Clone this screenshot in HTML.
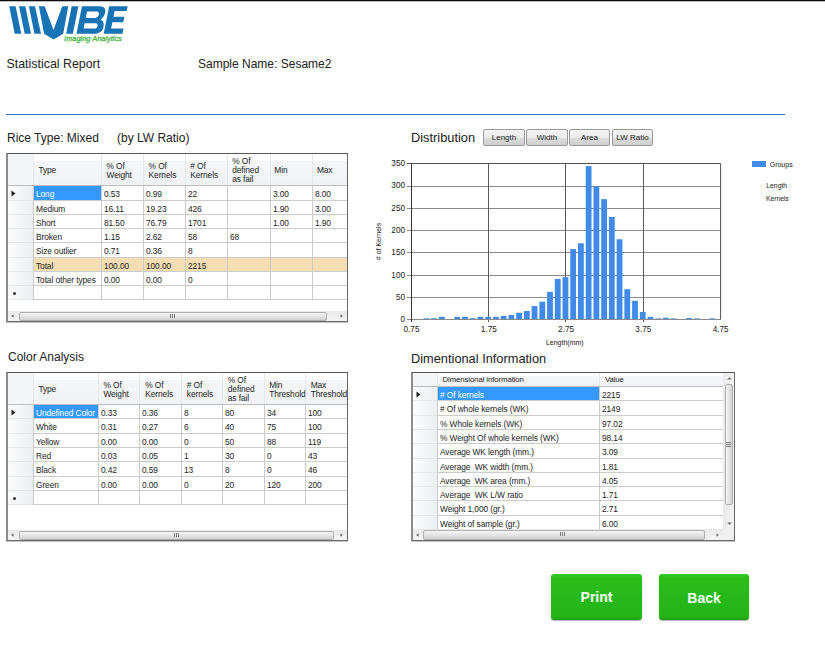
<!DOCTYPE html>
<html><head><meta charset="utf-8"><style>
html,body{margin:0;padding:0;background:#fff;}
body{width:825px;height:661px;position:relative;overflow:hidden;font-family:"Liberation Sans", sans-serif;}
.t{position:absolute;white-space:pre;line-height:1;}
.r{position:absolute;box-sizing:border-box;}

</style></head><body>
<div class="r" style="left:0px;top:0px;width:825px;height:1px;background:#0c0c0c"></div>
<div class="r" style="left:0px;top:1px;width:825px;height:1px;background:#bcbcbc"></div>
<svg style="position:absolute;left:0;top:0" width="140" height="50" viewBox="0 0 140 50">
<g fill="#1873b4">
<polygon points="9.2,6.2 15.6,6.2 21.3,33.8 14.7,33.8"/>
<polygon points="19.0,6.2 25.3,6.2 31.0,33.8 24.7,33.8"/>
<polygon points="28.9,6.2 35.0,6.2 41.0,33.8 34.4,33.8"/>
<polygon points="38.9,6.2 44.7,6.2 53.5,30 62.3,6.2 68.3,6.2 63.2,33.8 53.5,39.4 44.1,33.8"/>
<g transform="translate(6.72,0) skewX(-11.3)">
<rect x="66.2" y="6.2" width="6.7" height="27.6"/>
<path fill-rule="evenodd" d="M76.5,6.2 H94 C99.5,6.2 101,9.5 101,12.5 C101,15.5 99.8,17.8 97.8,19.6 C100.8,20.8 102.2,23.5 102.2,27 C102.2,31 99,33.8 94.5,33.8 H76.5 Z M82.6,11.4 H92.3 C94.3,11.4 95,12.8 95,14.6 C95,16.5 94,17.9 92,17.9 H82.6 Z M82.6,23.2 H93.3 C95.3,23.2 96,24.5 96,25.9 C96,27.5 95,28.6 93.3,28.6 H82.6 Z"/>
<path d="M103.7,6.2 H122.2 V11 H110.1 V16.8 H121 V22.3 H110.1 V28.5 H122.5 V33.8 H103.7 Z"/>
</g>
</g>
<text x="64.1" y="41.4" font-family="Liberation Sans" font-style="italic" font-size="7.9" fill="#35b035" stroke="#35b035" stroke-width="0.25" textLength="57.7" lengthAdjust="spacingAndGlyphs">Imaging Analytics</text>
</svg>
<div class="t" style="left:6.5px;top:58.4px;font-size:12.4px;color:#222;">Statistical Report</div>
<div class="t" style="left:198px;top:58.4px;font-size:12px;color:#222;">Sample Name: Sesame2</div>
<div class="r" style="left:6px;top:114px;width:779px;height:1px;background:#3877b5"></div>
<div class="t" style="left:7px;top:132px;font-size:12px;color:#222;">Rice Type: Mixed</div>
<div class="t" style="left:117px;top:132px;font-size:12px;color:#222;">(by LW Ratio)</div>
<div class="t" style="left:411px;top:132.2px;font-size:12.8px;color:#222;">Distribution</div>
<div class="t" style="left:8px;top:351.2px;font-size:12px;color:#222;">Color Analysis</div>
<div class="t" style="left:411px;top:353.3px;font-size:12.8px;color:#222;">Dimentional Information</div>
<div class="r" style="left:6px;top:153px;width:342px;height:170px;background:#fff"></div>
<div class="r" style="left:7px;top:154px;width:340px;height:31px;background:linear-gradient(#ffffff 0%,#ffffff 22%,#f5f6f8 23%,#f1f2f5 100%)"></div>
<div class="r" style="left:7px;top:154px;width:26px;height:31px;background:#f4f5f7"></div>
<div class="r" style="left:7px;top:186px;width:26px;height:114px;background:linear-gradient(90deg,#fdfdfd,#eceef1)"></div>
<div class="r" style="left:33px;top:154px;width:1px;height:31px;background:#e8e8e8"></div>
<div class="r" style="left:101px;top:154px;width:1px;height:31px;background:#e8e8e8"></div>
<div class="r" style="left:143px;top:154px;width:1px;height:31px;background:#e8e8e8"></div>
<div class="r" style="left:185px;top:154px;width:1px;height:31px;background:#e8e8e8"></div>
<div class="r" style="left:227px;top:154px;width:1px;height:31px;background:#e8e8e8"></div>
<div class="r" style="left:270px;top:154px;width:1px;height:31px;background:#e8e8e8"></div>
<div class="r" style="left:312px;top:154px;width:1px;height:31px;background:#e8e8e8"></div>
<div class="r" style="left:7px;top:185px;width:340px;height:1px;background:#bdbdbd"></div>
<div class="r" style="left:34px;top:258px;width:313px;height:13px;background:#f5deb3"></div>
<div class="r" style="left:34px;top:186px;width:67px;height:14px;background:#3399ff"></div>
<div class="r" style="left:33px;top:186px;width:1px;height:114px;background:#cccccc"></div>
<div class="r" style="left:101px;top:186px;width:1px;height:114px;background:#cccccc"></div>
<div class="r" style="left:143px;top:186px;width:1px;height:114px;background:#cccccc"></div>
<div class="r" style="left:185px;top:186px;width:1px;height:114px;background:#cccccc"></div>
<div class="r" style="left:227px;top:186px;width:1px;height:114px;background:#cccccc"></div>
<div class="r" style="left:270px;top:186px;width:1px;height:114px;background:#cccccc"></div>
<div class="r" style="left:312px;top:186px;width:1px;height:114px;background:#cccccc"></div>
<div class="r" style="left:33px;top:200px;width:314px;height:1px;background:#cccccc"></div>
<div class="r" style="left:7px;top:200px;width:26px;height:1px;background:#e6e7ea"></div>
<div class="r" style="left:33px;top:214px;width:314px;height:1px;background:#cccccc"></div>
<div class="r" style="left:7px;top:214px;width:26px;height:1px;background:#e6e7ea"></div>
<div class="r" style="left:33px;top:228px;width:314px;height:1px;background:#cccccc"></div>
<div class="r" style="left:7px;top:228px;width:26px;height:1px;background:#e6e7ea"></div>
<div class="r" style="left:33px;top:242px;width:314px;height:1px;background:#cccccc"></div>
<div class="r" style="left:7px;top:242px;width:26px;height:1px;background:#e6e7ea"></div>
<div class="r" style="left:33px;top:257px;width:314px;height:1px;background:#cccccc"></div>
<div class="r" style="left:7px;top:257px;width:26px;height:1px;background:#e6e7ea"></div>
<div class="r" style="left:33px;top:271px;width:314px;height:1px;background:#cccccc"></div>
<div class="r" style="left:7px;top:271px;width:26px;height:1px;background:#e6e7ea"></div>
<div class="r" style="left:33px;top:285px;width:314px;height:1px;background:#cccccc"></div>
<div class="r" style="left:7px;top:285px;width:26px;height:1px;background:#e6e7ea"></div>
<div class="r" style="left:33px;top:299px;width:314px;height:1px;background:#cccccc"></div>
<div class="r" style="left:7px;top:299px;width:26px;height:1px;background:#e6e7ea"></div>
<div class="t" style="left:38.4px;top:166.1px;font-size:8.4px;color:#1e1e1e;letter-spacing:-0.1px">Type</div>
<div class="t" style="left:106.5px;top:161.8px;font-size:8.4px;color:#1e1e1e;letter-spacing:-0.1px">% Of</div>
<div class="t" style="left:106.5px;top:170.5px;font-size:8.4px;color:#1e1e1e;letter-spacing:-0.1px">Weight</div>
<div class="t" style="left:148.6px;top:161.8px;font-size:8.4px;color:#1e1e1e;letter-spacing:-0.1px">% Of</div>
<div class="t" style="left:148.6px;top:170.5px;font-size:8.4px;color:#1e1e1e;letter-spacing:-0.1px">Kernels</div>
<div class="t" style="left:190.3px;top:161.8px;font-size:8.4px;color:#1e1e1e;letter-spacing:-0.1px"># Of</div>
<div class="t" style="left:190.3px;top:170.5px;font-size:8.4px;color:#1e1e1e;letter-spacing:-0.1px">Kernels</div>
<div class="t" style="left:232.2px;top:156.7px;font-size:8.4px;color:#1e1e1e;letter-spacing:-0.1px">% Of</div>
<div class="t" style="left:232.2px;top:165.7px;font-size:8.4px;color:#1e1e1e;letter-spacing:-0.1px">defined</div>
<div class="t" style="left:232.2px;top:174.8px;font-size:8.4px;color:#1e1e1e;letter-spacing:-0.1px">as fail</div>
<div class="t" style="left:274.3px;top:166.1px;font-size:8.4px;color:#1e1e1e;letter-spacing:-0.1px">Min</div>
<div class="t" style="left:316.9px;top:166.1px;font-size:8.4px;color:#1e1e1e;letter-spacing:-0.1px">Max</div>
<div class="t" style="left:36.0px;top:189.6px;font-size:8.4px;color:#fff;letter-spacing:-0.1px">Long</div>
<div class="t" style="left:104.0px;top:189.6px;font-size:8.4px;color:#1e1e1e;letter-spacing:-0.1px">0.53</div>
<div class="t" style="left:146.0px;top:189.6px;font-size:8.4px;color:#1e1e1e;letter-spacing:-0.1px">0.99</div>
<div class="t" style="left:188.0px;top:189.6px;font-size:8.4px;color:#1e1e1e;letter-spacing:-0.1px">22</div>
<div class="t" style="left:273.0px;top:189.6px;font-size:8.4px;color:#1e1e1e;letter-spacing:-0.1px">3.00</div>
<div class="t" style="left:315.0px;top:189.6px;font-size:8.4px;color:#1e1e1e;letter-spacing:-0.1px">8.00</div>
<div class="t" style="left:36.0px;top:204.6px;font-size:8.4px;color:#1e1e1e;letter-spacing:-0.1px">Medium</div>
<div class="t" style="left:104.0px;top:204.6px;font-size:8.4px;color:#1e1e1e;letter-spacing:-0.1px">16.11</div>
<div class="t" style="left:146.0px;top:204.6px;font-size:8.4px;color:#1e1e1e;letter-spacing:-0.1px">19.23</div>
<div class="t" style="left:188.0px;top:204.6px;font-size:8.4px;color:#1e1e1e;letter-spacing:-0.1px">426</div>
<div class="t" style="left:273.0px;top:204.6px;font-size:8.4px;color:#1e1e1e;letter-spacing:-0.1px">1.90</div>
<div class="t" style="left:315.0px;top:204.6px;font-size:8.4px;color:#1e1e1e;letter-spacing:-0.1px">3.00</div>
<div class="t" style="left:36.0px;top:218.6px;font-size:8.4px;color:#1e1e1e;letter-spacing:-0.1px">Short</div>
<div class="t" style="left:104.0px;top:218.6px;font-size:8.4px;color:#1e1e1e;letter-spacing:-0.1px">81.50</div>
<div class="t" style="left:146.0px;top:218.6px;font-size:8.4px;color:#1e1e1e;letter-spacing:-0.1px">76.79</div>
<div class="t" style="left:188.0px;top:218.6px;font-size:8.4px;color:#1e1e1e;letter-spacing:-0.1px">1701</div>
<div class="t" style="left:273.0px;top:218.6px;font-size:8.4px;color:#1e1e1e;letter-spacing:-0.1px">1.00</div>
<div class="t" style="left:315.0px;top:218.6px;font-size:8.4px;color:#1e1e1e;letter-spacing:-0.1px">1.90</div>
<div class="t" style="left:36.0px;top:232.6px;font-size:8.4px;color:#1e1e1e;letter-spacing:-0.1px">Broken</div>
<div class="t" style="left:104.0px;top:232.6px;font-size:8.4px;color:#1e1e1e;letter-spacing:-0.1px">1.15</div>
<div class="t" style="left:146.0px;top:232.6px;font-size:8.4px;color:#1e1e1e;letter-spacing:-0.1px">2.62</div>
<div class="t" style="left:188.0px;top:232.6px;font-size:8.4px;color:#1e1e1e;letter-spacing:-0.1px">58</div>
<div class="t" style="left:230.0px;top:232.6px;font-size:8.4px;color:#1e1e1e;letter-spacing:-0.1px">68</div>
<div class="t" style="left:36.0px;top:246.6px;font-size:8.4px;color:#1e1e1e;letter-spacing:-0.1px">Size outlier</div>
<div class="t" style="left:104.0px;top:246.6px;font-size:8.4px;color:#1e1e1e;letter-spacing:-0.1px">0.71</div>
<div class="t" style="left:146.0px;top:246.6px;font-size:8.4px;color:#1e1e1e;letter-spacing:-0.1px">0.36</div>
<div class="t" style="left:188.0px;top:246.6px;font-size:8.4px;color:#1e1e1e;letter-spacing:-0.1px">8</div>
<div class="t" style="left:36.0px;top:261.6px;font-size:8.4px;color:#1e1e1e;letter-spacing:-0.1px">Total</div>
<div class="t" style="left:104.0px;top:261.6px;font-size:8.4px;color:#1e1e1e;letter-spacing:-0.1px">100.00</div>
<div class="t" style="left:146.0px;top:261.6px;font-size:8.4px;color:#1e1e1e;letter-spacing:-0.1px">100.00</div>
<div class="t" style="left:188.0px;top:261.6px;font-size:8.4px;color:#1e1e1e;letter-spacing:-0.1px">2215</div>
<div class="t" style="left:36.0px;top:275.6px;font-size:8.4px;color:#1e1e1e;letter-spacing:-0.1px">Total other types</div>
<div class="t" style="left:104.0px;top:275.6px;font-size:8.4px;color:#1e1e1e;letter-spacing:-0.1px">0.00</div>
<div class="t" style="left:146.0px;top:275.6px;font-size:8.4px;color:#1e1e1e;letter-spacing:-0.1px">0.00</div>
<div class="t" style="left:188.0px;top:275.6px;font-size:8.4px;color:#1e1e1e;letter-spacing:-0.1px">0</div>
<svg class="r" style="left:10.6px;top:189.5px" width="6" height="7"><polygon points="0.5,0.5 4.5,3.5 0.5,6.5" fill="#222"/></svg>
<div class="r" style="left:6px;top:153px;width:342px;height:169px;border-left:2px solid #8c8c8c;border-top:1px solid #555;border-right:1px solid #686868;border-bottom:1px solid #6a6a6a;box-shadow:0 1px 0 #c4c4c4"></div>
<div class="r" style="left:12.5px;top:291.6px;width:3px;height:3px;border-radius:50%;background:#333"></div>
<div class="r" style="left:8px;top:311px;width:339px;height:10px;background:linear-gradient(#e9e9e9,#f4f4f4)"></div>
<div class="r" style="left:18.8px;top:311.5px;width:308.2px;height:9px;border:1px solid #b0b0b0;border-radius:2px;background:linear-gradient(#f5f5f5 0%,#e6e6e6 45%,#d2d2d2 100%)"></div>
<div class="r" style="left:170px;top:314px;width:1px;height:4px;background:#7a7a7a"></div>
<div class="r" style="left:172px;top:314px;width:1px;height:4px;background:#7a7a7a"></div>
<div class="r" style="left:174px;top:314px;width:1px;height:4px;background:#7a7a7a"></div>
<svg class="r" style="left:9.8px;top:313.0px" width="5" height="6"><polygon points="3.5,1.2 1.2,3 3.5,4.8" fill="#666"/></svg>
<svg class="r" style="left:339px;top:313.0px" width="5" height="6"><polygon points="1.5,1.2 3.8,3 1.5,4.8" fill="#666"/></svg>
<div class="r" style="left:6px;top:372px;width:342px;height:170px;background:#fff"></div>
<div class="r" style="left:7px;top:373px;width:340px;height:31px;background:linear-gradient(#ffffff 0%,#ffffff 22%,#f5f6f8 23%,#f1f2f5 100%)"></div>
<div class="r" style="left:7px;top:373px;width:26px;height:31px;background:#f4f5f7"></div>
<div class="r" style="left:7px;top:405px;width:26px;height:100px;background:linear-gradient(90deg,#fdfdfd,#eceef1)"></div>
<div class="r" style="left:33px;top:373px;width:1px;height:31px;background:#e8e8e8"></div>
<div class="r" style="left:98px;top:373px;width:1px;height:31px;background:#e8e8e8"></div>
<div class="r" style="left:139px;top:373px;width:1px;height:31px;background:#e8e8e8"></div>
<div class="r" style="left:181px;top:373px;width:1px;height:31px;background:#e8e8e8"></div>
<div class="r" style="left:222px;top:373px;width:1px;height:31px;background:#e8e8e8"></div>
<div class="r" style="left:264px;top:373px;width:1px;height:31px;background:#e8e8e8"></div>
<div class="r" style="left:305px;top:373px;width:1px;height:31px;background:#e8e8e8"></div>
<div class="r" style="left:7px;top:404px;width:340px;height:1px;background:#bdbdbd"></div>
<div class="r" style="left:34px;top:405px;width:64px;height:13px;background:#3399ff"></div>
<div class="r" style="left:33px;top:405px;width:1px;height:100px;background:#cccccc"></div>
<div class="r" style="left:98px;top:405px;width:1px;height:100px;background:#cccccc"></div>
<div class="r" style="left:139px;top:405px;width:1px;height:100px;background:#cccccc"></div>
<div class="r" style="left:181px;top:405px;width:1px;height:100px;background:#cccccc"></div>
<div class="r" style="left:222px;top:405px;width:1px;height:100px;background:#cccccc"></div>
<div class="r" style="left:264px;top:405px;width:1px;height:100px;background:#cccccc"></div>
<div class="r" style="left:305px;top:405px;width:1px;height:100px;background:#cccccc"></div>
<div class="r" style="left:33px;top:418px;width:314px;height:1px;background:#cccccc"></div>
<div class="r" style="left:7px;top:418px;width:26px;height:1px;background:#e6e7ea"></div>
<div class="r" style="left:33px;top:433px;width:314px;height:1px;background:#cccccc"></div>
<div class="r" style="left:7px;top:433px;width:26px;height:1px;background:#e6e7ea"></div>
<div class="r" style="left:33px;top:447px;width:314px;height:1px;background:#cccccc"></div>
<div class="r" style="left:7px;top:447px;width:26px;height:1px;background:#e6e7ea"></div>
<div class="r" style="left:33px;top:461px;width:314px;height:1px;background:#cccccc"></div>
<div class="r" style="left:7px;top:461px;width:26px;height:1px;background:#e6e7ea"></div>
<div class="r" style="left:33px;top:476px;width:314px;height:1px;background:#cccccc"></div>
<div class="r" style="left:7px;top:476px;width:26px;height:1px;background:#e6e7ea"></div>
<div class="r" style="left:33px;top:490px;width:314px;height:1px;background:#cccccc"></div>
<div class="r" style="left:7px;top:490px;width:26px;height:1px;background:#e6e7ea"></div>
<div class="r" style="left:33px;top:504px;width:314px;height:1px;background:#cccccc"></div>
<div class="r" style="left:7px;top:504px;width:26px;height:1px;background:#e6e7ea"></div>
<div class="t" style="left:38.4px;top:385.1px;font-size:8.4px;color:#1e1e1e;letter-spacing:-0.1px">Type</div>
<div class="t" style="left:103.4px;top:380.8px;font-size:8.4px;color:#1e1e1e;letter-spacing:-0.1px">% Of</div>
<div class="t" style="left:103.4px;top:389.5px;font-size:8.4px;color:#1e1e1e;letter-spacing:-0.1px">Weight</div>
<div class="t" style="left:145.3px;top:380.8px;font-size:8.4px;color:#1e1e1e;letter-spacing:-0.1px">% Of</div>
<div class="t" style="left:145.3px;top:389.5px;font-size:8.4px;color:#1e1e1e;letter-spacing:-0.1px">Kernels</div>
<div class="t" style="left:186.8px;top:380.8px;font-size:8.4px;color:#1e1e1e;letter-spacing:-0.1px"># Of</div>
<div class="t" style="left:186.8px;top:389.5px;font-size:8.4px;color:#1e1e1e;letter-spacing:-0.1px">kernels</div>
<div class="t" style="left:227.8px;top:375.7px;font-size:8.4px;color:#1e1e1e;letter-spacing:-0.1px">% Of</div>
<div class="t" style="left:227.8px;top:384.7px;font-size:8.4px;color:#1e1e1e;letter-spacing:-0.1px">defined</div>
<div class="t" style="left:227.8px;top:393.8px;font-size:8.4px;color:#1e1e1e;letter-spacing:-0.1px">as fail</div>
<div class="t" style="left:269.2px;top:380.8px;font-size:8.4px;color:#1e1e1e;letter-spacing:-0.1px">Min</div>
<div class="t" style="left:269.2px;top:389.5px;font-size:8.4px;color:#1e1e1e;letter-spacing:-0.1px">Threshold</div>
<div class="t" style="left:310.7px;top:380.8px;font-size:8.4px;color:#1e1e1e;letter-spacing:-0.1px">Max</div>
<div class="t" style="left:310.7px;top:389.5px;font-size:8.4px;color:#1e1e1e;letter-spacing:-0.1px">Threshold</div>
<div class="t" style="left:36.0px;top:408.6px;font-size:8.4px;color:#fff;letter-spacing:-0.1px">Undefined Color</div>
<div class="t" style="left:101.0px;top:408.6px;font-size:8.4px;color:#1e1e1e;letter-spacing:-0.1px">0.33</div>
<div class="t" style="left:142.0px;top:408.6px;font-size:8.4px;color:#1e1e1e;letter-spacing:-0.1px">0.36</div>
<div class="t" style="left:184.0px;top:408.6px;font-size:8.4px;color:#1e1e1e;letter-spacing:-0.1px">8</div>
<div class="t" style="left:225.0px;top:408.6px;font-size:8.4px;color:#1e1e1e;letter-spacing:-0.1px">80</div>
<div class="t" style="left:267.0px;top:408.6px;font-size:8.4px;color:#1e1e1e;letter-spacing:-0.1px">34</div>
<div class="t" style="left:308.0px;top:408.6px;font-size:8.4px;color:#1e1e1e;letter-spacing:-0.1px">100</div>
<div class="t" style="left:36.0px;top:422.6px;font-size:8.4px;color:#1e1e1e;letter-spacing:-0.1px">White</div>
<div class="t" style="left:101.0px;top:422.6px;font-size:8.4px;color:#1e1e1e;letter-spacing:-0.1px">0.31</div>
<div class="t" style="left:142.0px;top:422.6px;font-size:8.4px;color:#1e1e1e;letter-spacing:-0.1px">0.27</div>
<div class="t" style="left:184.0px;top:422.6px;font-size:8.4px;color:#1e1e1e;letter-spacing:-0.1px">6</div>
<div class="t" style="left:225.0px;top:422.6px;font-size:8.4px;color:#1e1e1e;letter-spacing:-0.1px">40</div>
<div class="t" style="left:267.0px;top:422.6px;font-size:8.4px;color:#1e1e1e;letter-spacing:-0.1px">75</div>
<div class="t" style="left:308.0px;top:422.6px;font-size:8.4px;color:#1e1e1e;letter-spacing:-0.1px">100</div>
<div class="t" style="left:36.0px;top:437.6px;font-size:8.4px;color:#1e1e1e;letter-spacing:-0.1px">Yellow</div>
<div class="t" style="left:101.0px;top:437.6px;font-size:8.4px;color:#1e1e1e;letter-spacing:-0.1px">0.00</div>
<div class="t" style="left:142.0px;top:437.6px;font-size:8.4px;color:#1e1e1e;letter-spacing:-0.1px">0.00</div>
<div class="t" style="left:184.0px;top:437.6px;font-size:8.4px;color:#1e1e1e;letter-spacing:-0.1px">0</div>
<div class="t" style="left:225.0px;top:437.6px;font-size:8.4px;color:#1e1e1e;letter-spacing:-0.1px">50</div>
<div class="t" style="left:267.0px;top:437.6px;font-size:8.4px;color:#1e1e1e;letter-spacing:-0.1px">88</div>
<div class="t" style="left:308.0px;top:437.6px;font-size:8.4px;color:#1e1e1e;letter-spacing:-0.1px">119</div>
<div class="t" style="left:36.0px;top:451.6px;font-size:8.4px;color:#1e1e1e;letter-spacing:-0.1px">Red</div>
<div class="t" style="left:101.0px;top:451.6px;font-size:8.4px;color:#1e1e1e;letter-spacing:-0.1px">0.03</div>
<div class="t" style="left:142.0px;top:451.6px;font-size:8.4px;color:#1e1e1e;letter-spacing:-0.1px">0.05</div>
<div class="t" style="left:184.0px;top:451.6px;font-size:8.4px;color:#1e1e1e;letter-spacing:-0.1px">1</div>
<div class="t" style="left:225.0px;top:451.6px;font-size:8.4px;color:#1e1e1e;letter-spacing:-0.1px">30</div>
<div class="t" style="left:267.0px;top:451.6px;font-size:8.4px;color:#1e1e1e;letter-spacing:-0.1px">0</div>
<div class="t" style="left:308.0px;top:451.6px;font-size:8.4px;color:#1e1e1e;letter-spacing:-0.1px">43</div>
<div class="t" style="left:36.0px;top:465.6px;font-size:8.4px;color:#1e1e1e;letter-spacing:-0.1px">Black</div>
<div class="t" style="left:101.0px;top:465.6px;font-size:8.4px;color:#1e1e1e;letter-spacing:-0.1px">0.42</div>
<div class="t" style="left:142.0px;top:465.6px;font-size:8.4px;color:#1e1e1e;letter-spacing:-0.1px">0.59</div>
<div class="t" style="left:184.0px;top:465.6px;font-size:8.4px;color:#1e1e1e;letter-spacing:-0.1px">13</div>
<div class="t" style="left:225.0px;top:465.6px;font-size:8.4px;color:#1e1e1e;letter-spacing:-0.1px">8</div>
<div class="t" style="left:267.0px;top:465.6px;font-size:8.4px;color:#1e1e1e;letter-spacing:-0.1px">0</div>
<div class="t" style="left:308.0px;top:465.6px;font-size:8.4px;color:#1e1e1e;letter-spacing:-0.1px">46</div>
<div class="t" style="left:36.0px;top:480.6px;font-size:8.4px;color:#1e1e1e;letter-spacing:-0.1px">Green</div>
<div class="t" style="left:101.0px;top:480.6px;font-size:8.4px;color:#1e1e1e;letter-spacing:-0.1px">0.00</div>
<div class="t" style="left:142.0px;top:480.6px;font-size:8.4px;color:#1e1e1e;letter-spacing:-0.1px">0.00</div>
<div class="t" style="left:184.0px;top:480.6px;font-size:8.4px;color:#1e1e1e;letter-spacing:-0.1px">0</div>
<div class="t" style="left:225.0px;top:480.6px;font-size:8.4px;color:#1e1e1e;letter-spacing:-0.1px">20</div>
<div class="t" style="left:267.0px;top:480.6px;font-size:8.4px;color:#1e1e1e;letter-spacing:-0.1px">120</div>
<div class="t" style="left:308.0px;top:480.6px;font-size:8.4px;color:#1e1e1e;letter-spacing:-0.1px">200</div>
<svg class="r" style="left:10.6px;top:408.5px" width="6" height="7"><polygon points="0.5,0.5 4.5,3.5 0.5,6.5" fill="#222"/></svg>
<div class="r" style="left:6px;top:372px;width:342px;height:169px;border-left:2px solid #8c8c8c;border-top:1px solid #555;border-right:1px solid #686868;border-bottom:1px solid #6a6a6a;box-shadow:0 1px 0 #c4c4c4"></div>
<div class="r" style="left:12.5px;top:496.6px;width:3px;height:3px;border-radius:50%;background:#333"></div>
<div class="r" style="left:8px;top:530px;width:339px;height:10px;background:linear-gradient(#e9e9e9,#f4f4f4)"></div>
<div class="r" style="left:18.8px;top:530.5px;width:315.2px;height:9px;border:1px solid #b0b0b0;border-radius:2px;background:linear-gradient(#f5f5f5 0%,#e6e6e6 45%,#d2d2d2 100%)"></div>
<div class="r" style="left:174px;top:533px;width:1px;height:4px;background:#7a7a7a"></div>
<div class="r" style="left:176px;top:533px;width:1px;height:4px;background:#7a7a7a"></div>
<div class="r" style="left:178px;top:533px;width:1px;height:4px;background:#7a7a7a"></div>
<svg class="r" style="left:9.8px;top:532.0px" width="5" height="6"><polygon points="3.5,1.2 1.2,3 3.5,4.8" fill="#666"/></svg>
<svg class="r" style="left:339px;top:532.0px" width="5" height="6"><polygon points="1.5,1.2 3.8,3 1.5,4.8" fill="#666"/></svg>
<div class="r" style="left:411px;top:372px;width:324px;height:170px;background:#fff"></div>
<div class="r" style="left:412px;top:373px;width:311px;height:13px;background:linear-gradient(#ffffff 0%,#ffffff 22%,#f5f6f8 23%,#f1f2f5 100%)"></div>
<div class="r" style="left:412px;top:373px;width:25px;height:13px;background:#f4f5f7"></div>
<div class="r" style="left:412px;top:387px;width:25px;height:143px;background:linear-gradient(90deg,#fdfdfd,#eceef1)"></div>
<div class="r" style="left:437px;top:373px;width:1px;height:13px;background:#e8e8e8"></div>
<div class="r" style="left:599px;top:373px;width:1px;height:13px;background:#e8e8e8"></div>
<div class="r" style="left:412px;top:386px;width:311px;height:1px;background:#bdbdbd"></div>
<div class="r" style="left:438px;top:387px;width:161px;height:13px;background:#3399ff"></div>
<div class="r" style="left:437px;top:387px;width:1px;height:143px;background:#cccccc"></div>
<div class="r" style="left:599px;top:387px;width:1px;height:143px;background:#cccccc"></div>
<div class="r" style="left:437px;top:400px;width:286px;height:1px;background:#cccccc"></div>
<div class="r" style="left:412px;top:400px;width:25px;height:1px;background:#e6e7ea"></div>
<div class="r" style="left:437px;top:415px;width:286px;height:1px;background:#cccccc"></div>
<div class="r" style="left:412px;top:415px;width:25px;height:1px;background:#e6e7ea"></div>
<div class="r" style="left:437px;top:429px;width:286px;height:1px;background:#cccccc"></div>
<div class="r" style="left:412px;top:429px;width:25px;height:1px;background:#e6e7ea"></div>
<div class="r" style="left:437px;top:443px;width:286px;height:1px;background:#cccccc"></div>
<div class="r" style="left:412px;top:443px;width:25px;height:1px;background:#e6e7ea"></div>
<div class="r" style="left:437px;top:458px;width:286px;height:1px;background:#cccccc"></div>
<div class="r" style="left:412px;top:458px;width:25px;height:1px;background:#e6e7ea"></div>
<div class="r" style="left:437px;top:472px;width:286px;height:1px;background:#cccccc"></div>
<div class="r" style="left:412px;top:472px;width:25px;height:1px;background:#e6e7ea"></div>
<div class="r" style="left:437px;top:486px;width:286px;height:1px;background:#cccccc"></div>
<div class="r" style="left:412px;top:486px;width:25px;height:1px;background:#e6e7ea"></div>
<div class="r" style="left:437px;top:500px;width:286px;height:1px;background:#cccccc"></div>
<div class="r" style="left:412px;top:500px;width:25px;height:1px;background:#e6e7ea"></div>
<div class="r" style="left:437px;top:515px;width:286px;height:1px;background:#cccccc"></div>
<div class="r" style="left:412px;top:515px;width:25px;height:1px;background:#e6e7ea"></div>
<div class="r" style="left:437px;top:529px;width:286px;height:1px;background:#cccccc"></div>
<div class="r" style="left:412px;top:529px;width:25px;height:1px;background:#e6e7ea"></div>
<div class="t" style="left:442.5px;top:375.7px;font-size:7.8px;color:#1e1e1e;letter-spacing:-0.1px">Dimensional information</div>
<div class="t" style="left:604.9px;top:375.7px;font-size:7.8px;color:#1e1e1e;letter-spacing:-0.1px">Value</div>
<div class="t" style="left:440.0px;top:390.6px;font-size:8.4px;color:#fff;letter-spacing:-0.1px"># Of kernels</div>
<div class="t" style="left:602.0px;top:390.6px;font-size:8.4px;color:#1e1e1e;letter-spacing:-0.1px">2215</div>
<div class="t" style="left:440.0px;top:404.6px;font-size:8.4px;color:#1e1e1e;letter-spacing:-0.1px"># Of whole kernels (WK)</div>
<div class="t" style="left:602.0px;top:404.6px;font-size:8.4px;color:#1e1e1e;letter-spacing:-0.1px">2149</div>
<div class="t" style="left:440.0px;top:419.6px;font-size:8.4px;color:#1e1e1e;letter-spacing:-0.1px">% Whole kernels (WK)</div>
<div class="t" style="left:602.0px;top:419.6px;font-size:8.4px;color:#1e1e1e;letter-spacing:-0.1px">97.02</div>
<div class="t" style="left:440.0px;top:433.6px;font-size:8.4px;color:#1e1e1e;letter-spacing:-0.1px">% Weight Of whole kernels (WK)</div>
<div class="t" style="left:602.0px;top:433.6px;font-size:8.4px;color:#1e1e1e;letter-spacing:-0.1px">98.14</div>
<div class="t" style="left:440.0px;top:447.6px;font-size:8.4px;color:#1e1e1e;letter-spacing:-0.1px">Average WK length (mm.)</div>
<div class="t" style="left:602.0px;top:447.6px;font-size:8.4px;color:#1e1e1e;letter-spacing:-0.1px">3.09</div>
<div class="t" style="left:440.0px;top:462.6px;font-size:8.4px;color:#1e1e1e;letter-spacing:-0.1px">Average  WK width (mm.)</div>
<div class="t" style="left:602.0px;top:462.6px;font-size:8.4px;color:#1e1e1e;letter-spacing:-0.1px">1.81</div>
<div class="t" style="left:440.0px;top:476.6px;font-size:8.4px;color:#1e1e1e;letter-spacing:-0.1px">Average  WK area (mm.)</div>
<div class="t" style="left:602.0px;top:476.6px;font-size:8.4px;color:#1e1e1e;letter-spacing:-0.1px">4.05</div>
<div class="t" style="left:440.0px;top:490.6px;font-size:8.4px;color:#1e1e1e;letter-spacing:-0.1px">Average  WK L/W ratio</div>
<div class="t" style="left:602.0px;top:490.6px;font-size:8.4px;color:#1e1e1e;letter-spacing:-0.1px">1.71</div>
<div class="t" style="left:440.0px;top:504.6px;font-size:8.4px;color:#1e1e1e;letter-spacing:-0.1px">Weight 1,000 (gr.)</div>
<div class="t" style="left:602.0px;top:504.6px;font-size:8.4px;color:#1e1e1e;letter-spacing:-0.1px">2.71</div>
<div class="t" style="left:440.0px;top:519.6px;font-size:8.4px;color:#1e1e1e;letter-spacing:-0.1px">Weight of sample (gr.)</div>
<div class="t" style="left:602.0px;top:519.6px;font-size:8.4px;color:#1e1e1e;letter-spacing:-0.1px">6.00</div>
<svg class="r" style="left:415.6px;top:390.5px" width="6" height="7"><polygon points="0.5,0.5 4.5,3.5 0.5,6.5" fill="#222"/></svg>
<div class="r" style="left:411px;top:372px;width:324px;height:169px;border-left:2px solid #8c8c8c;border-top:1px solid #555;border-right:1px solid #686868;border-bottom:1px solid #6a6a6a;box-shadow:0 1px 0 #c4c4c4"></div>
<div class="r" style="left:413px;top:529px;width:310px;height:11px;background:linear-gradient(#e9e9e9,#f4f4f4)"></div>
<div class="r" style="left:423px;top:529.5px;width:281.6px;height:10px;border:1px solid #b0b0b0;border-radius:2px;background:linear-gradient(#f5f5f5 0%,#e6e6e6 45%,#d2d2d2 100%)"></div>
<div class="r" style="left:560px;top:532px;width:1px;height:4px;background:#7a7a7a"></div>
<div class="r" style="left:562px;top:532px;width:1px;height:4px;background:#7a7a7a"></div>
<div class="r" style="left:564px;top:532px;width:1px;height:4px;background:#7a7a7a"></div>
<svg class="r" style="left:414.8px;top:531.5px" width="5" height="6"><polygon points="3.5,1.2 1.2,3 3.5,4.8" fill="#666"/></svg>
<svg class="r" style="left:715px;top:531.5px" width="5" height="6"><polygon points="1.5,1.2 3.8,3 1.5,4.8" fill="#666"/></svg>
<div class="r" style="left:723px;top:373px;width:11px;height:156px;background:linear-gradient(90deg,#e9e9e9,#f4f4f4)"></div>
<div class="r" style="left:724.5px;top:384.3px;width:8.5px;height:120.3px;border:1px solid #b0b0b0;border-radius:2px;background:linear-gradient(90deg,#f5f5f5 0%,#e6e6e6 45%,#d2d2d2 100%)"></div>
<div class="r" style="left:726px;top:442px;width:5px;height:1px;background:#7a7a7a"></div>
<div class="r" style="left:726px;top:444px;width:5px;height:1px;background:#7a7a7a"></div>
<div class="r" style="left:726px;top:446px;width:5px;height:1px;background:#7a7a7a"></div>
<svg class="r" style="left:725.5px;top:376px" width="7" height="5"><polygon points="1.2,3.6 3.5,1.3 5.8,3.6" fill="#666"/></svg>
<svg class="r" style="left:725.5px;top:521px" width="7" height="5"><polygon points="1.2,1.4 3.5,3.7 5.8,1.4" fill="#666"/></svg>
<div class="r" style="left:723px;top:529px;width:11px;height:11px;background:#f0f0f0"></div>
<div class="r" style="left:483px;top:129px;width:42px;height:16.5px;border:1px solid #9a9a9a;border-radius:2px;background:linear-gradient(#f4f4f4 0%,#ececec 50%,#dddddd 51%,#cfcfcf 100%);font-size:8px;line-height:16.5px;text-align:center;color:#222">Length</div>
<div class="r" style="left:526px;top:129px;width:42px;height:16.5px;border:1px solid #9a9a9a;border-radius:2px;background:linear-gradient(#f4f4f4 0%,#ececec 50%,#dddddd 51%,#cfcfcf 100%);font-size:8px;line-height:16.5px;text-align:center;color:#222">Width</div>
<div class="r" style="left:569px;top:129px;width:41px;height:16.5px;border:1px solid #9a9a9a;border-radius:2px;background:linear-gradient(#f4f4f4 0%,#ececec 50%,#dddddd 51%,#cfcfcf 100%);font-size:8px;line-height:16.5px;text-align:center;color:#222">Area</div>
<div class="r" style="left:612px;top:129px;width:41px;height:16.5px;border:1px solid #9a9a9a;border-radius:2px;background:linear-gradient(#f4f4f4 0%,#ececec 50%,#dddddd 51%,#cfcfcf 100%);font-size:8px;line-height:16.5px;text-align:center;color:#222">LW Ratio</div>
<svg style="position:absolute;left:0;top:0" width="825" height="661"><line x1="407.0" y1="186.5" x2="720.6" y2="186.5" stroke="#8c8c8c" stroke-width="1"/><line x1="407.0" y1="208.5" x2="720.6" y2="208.5" stroke="#8c8c8c" stroke-width="1"/><line x1="407.0" y1="230.5" x2="720.6" y2="230.5" stroke="#8c8c8c" stroke-width="1"/><line x1="407.0" y1="252.5" x2="720.6" y2="252.5" stroke="#8c8c8c" stroke-width="1"/><line x1="407.0" y1="275.5" x2="720.6" y2="275.5" stroke="#8c8c8c" stroke-width="1"/><line x1="407.0" y1="297.5" x2="720.6" y2="297.5" stroke="#8c8c8c" stroke-width="1"/><line x1="488.5" y1="163.5" x2="488.5" y2="322.0" stroke="#5a5a5a" stroke-width="1"/><line x1="565.5" y1="163.5" x2="565.5" y2="322.0" stroke="#5a5a5a" stroke-width="1"/><line x1="643.5" y1="163.5" x2="643.5" y2="322.0" stroke="#5a5a5a" stroke-width="1"/><rect x="423.45" y="318.25" width="5.8" height="1.25" fill="#418ae8"/><rect x="431.18" y="318.25" width="5.8" height="1.25" fill="#418ae8"/><rect x="438.91" y="316.83" width="5.8" height="2.67" fill="#418ae8"/><rect x="454.37" y="316.83" width="5.8" height="2.67" fill="#418ae8"/><rect x="462.09" y="316.83" width="5.8" height="2.67" fill="#418ae8"/><rect x="469.82" y="318.16" width="5.8" height="1.34" fill="#418ae8"/><rect x="477.55" y="316.83" width="5.8" height="2.67" fill="#418ae8"/><rect x="485.27" y="316.83" width="5.8" height="2.67" fill="#418ae8"/><rect x="493.00" y="316.83" width="5.8" height="2.67" fill="#418ae8"/><rect x="500.73" y="315.93" width="5.8" height="3.57" fill="#418ae8"/><rect x="508.46" y="315.04" width="5.8" height="4.46" fill="#418ae8"/><rect x="516.18" y="312.81" width="5.8" height="6.69" fill="#418ae8"/><rect x="523.91" y="311.03" width="5.8" height="8.47" fill="#418ae8"/><rect x="531.64" y="306.13" width="5.8" height="13.37" fill="#418ae8"/><rect x="539.37" y="301.67" width="5.8" height="17.83" fill="#418ae8"/><rect x="547.10" y="291.87" width="5.8" height="27.63" fill="#418ae8"/><rect x="554.82" y="278.94" width="5.8" height="40.56" fill="#418ae8"/><rect x="562.55" y="277.16" width="5.8" height="42.34" fill="#418ae8"/><rect x="570.28" y="249.08" width="5.8" height="70.42" fill="#418ae8"/><rect x="578.00" y="243.28" width="5.8" height="76.22" fill="#418ae8"/><rect x="585.73" y="166.17" width="5.8" height="153.33" fill="#418ae8"/><rect x="593.46" y="186.23" width="5.8" height="133.27" fill="#418ae8"/><rect x="601.19" y="199.16" width="5.8" height="120.34" fill="#418ae8"/><rect x="608.91" y="216.99" width="5.8" height="102.51" fill="#418ae8"/><rect x="616.64" y="239.27" width="5.8" height="80.23" fill="#418ae8"/><rect x="624.37" y="289.19" width="5.8" height="30.31" fill="#418ae8"/><rect x="632.10" y="300.78" width="5.8" height="18.72" fill="#418ae8"/><rect x="639.83" y="311.92" width="5.8" height="7.58" fill="#418ae8"/><rect x="647.55" y="316.83" width="5.8" height="2.67" fill="#418ae8"/><rect x="655.28" y="318.39" width="5.8" height="1.11" fill="#418ae8"/><rect x="663.01" y="317.72" width="5.8" height="1.78" fill="#418ae8"/><rect x="670.74" y="318.39" width="5.8" height="1.11" fill="#418ae8"/><rect x="686.19" y="317.94" width="5.8" height="1.56" fill="#418ae8"/><rect x="693.92" y="318.39" width="5.8" height="1.11" fill="#418ae8"/><rect x="709.37" y="318.39" width="5.8" height="1.11" fill="#418ae8"/><line x1="407.0" y1="319.5" x2="720.6" y2="319.5" stroke="#8a8a8a" stroke-width="1"/><line x1="411.5" y1="163.5" x2="411.5" y2="322.0" stroke="#333" stroke-width="1"/><line x1="407.0" y1="163.5" x2="720.6" y2="163.5" stroke="#505050" stroke-width="1"/><line x1="720.6" y1="163.5" x2="720.6" y2="319.5" stroke="#505050" stroke-width="1"/></svg>
<div class="t" style="left:355px;width:50px;text-align:right;top:316.1px;font-size:8.2px;color:#222">0</div>
<div class="t" style="left:355px;width:50px;text-align:right;top:293.81428571428575px;font-size:8.2px;color:#222">50</div>
<div class="t" style="left:355px;width:50px;text-align:right;top:271.52857142857147px;font-size:8.2px;color:#222">100</div>
<div class="t" style="left:355px;width:50px;text-align:right;top:249.24285714285713px;font-size:8.2px;color:#222">150</div>
<div class="t" style="left:355px;width:50px;text-align:right;top:226.95714285714286px;font-size:8.2px;color:#222">200</div>
<div class="t" style="left:355px;width:50px;text-align:right;top:204.67142857142855px;font-size:8.2px;color:#222">250</div>
<div class="t" style="left:355px;width:50px;text-align:right;top:182.38571428571427px;font-size:8.2px;color:#222">300</div>
<div class="t" style="left:355px;width:50px;text-align:right;top:160.1px;font-size:8.2px;color:#222">350</div>
<div class="t" style="left:391.5px;width:40px;text-align:center;top:325.8px;font-size:8.2px;color:#222">0.75</div>
<div class="t" style="left:468.775px;width:40px;text-align:center;top:325.8px;font-size:8.2px;color:#222">1.75</div>
<div class="t" style="left:546.05px;width:40px;text-align:center;top:325.8px;font-size:8.2px;color:#222">2.75</div>
<div class="t" style="left:623.325px;width:40px;text-align:center;top:325.8px;font-size:8.2px;color:#222">3.75</div>
<div class="t" style="left:700.6px;width:40px;text-align:center;top:325.8px;font-size:8.2px;color:#222">4.75</div>
<div class="t" style="left:534.8px;width:60px;text-align:center;top:338.6px;font-size:7px;color:#222">Length(mm)</div>
<div class="t" style="left:347.6px;width:60px;text-align:center;top:238.0px;font-size:7px;color:#222;transform:rotate(-90deg)"># of Kernels</div>
<div class="r" style="left:752px;top:161.2px;width:14px;height:5.7px;background:#418ae8"></div>
<div class="t" style="left:769.7px;top:160.5px;font-size:7px;color:#222;">Groups</div>
<div class="t" style="left:766.3px;top:183.1px;font-size:6.8px;color:#222;">Length</div>
<div class="t" style="left:766px;top:196.2px;font-size:6.7px;color:#222;">Kernels</div>
<div class="r" style="left:551px;top:574px;width:91px;height:46px;border-radius:3px;background:linear-gradient(#33c923 0%,#2abd1a 12%,#26b818 50%,#24b517 93%,#1b9914 100%);box-shadow:0 1px 1px rgba(0,0,0,0.3)"></div>
<div class="t" style="left:551px;width:91px;text-align:center;top:589.5px;font-size:14px;font-weight:bold;color:#fff">Print</div>
<div class="r" style="left:659px;top:574px;width:90px;height:46px;border-radius:3px;background:linear-gradient(#33c923 0%,#2abd1a 12%,#26b818 50%,#24b517 93%,#1b9914 100%);box-shadow:0 1px 1px rgba(0,0,0,0.3)"></div>
<div class="t" style="left:659px;width:90px;text-align:center;top:590.5px;font-size:14px;font-weight:bold;color:#fff">Back</div>
</body></html>
